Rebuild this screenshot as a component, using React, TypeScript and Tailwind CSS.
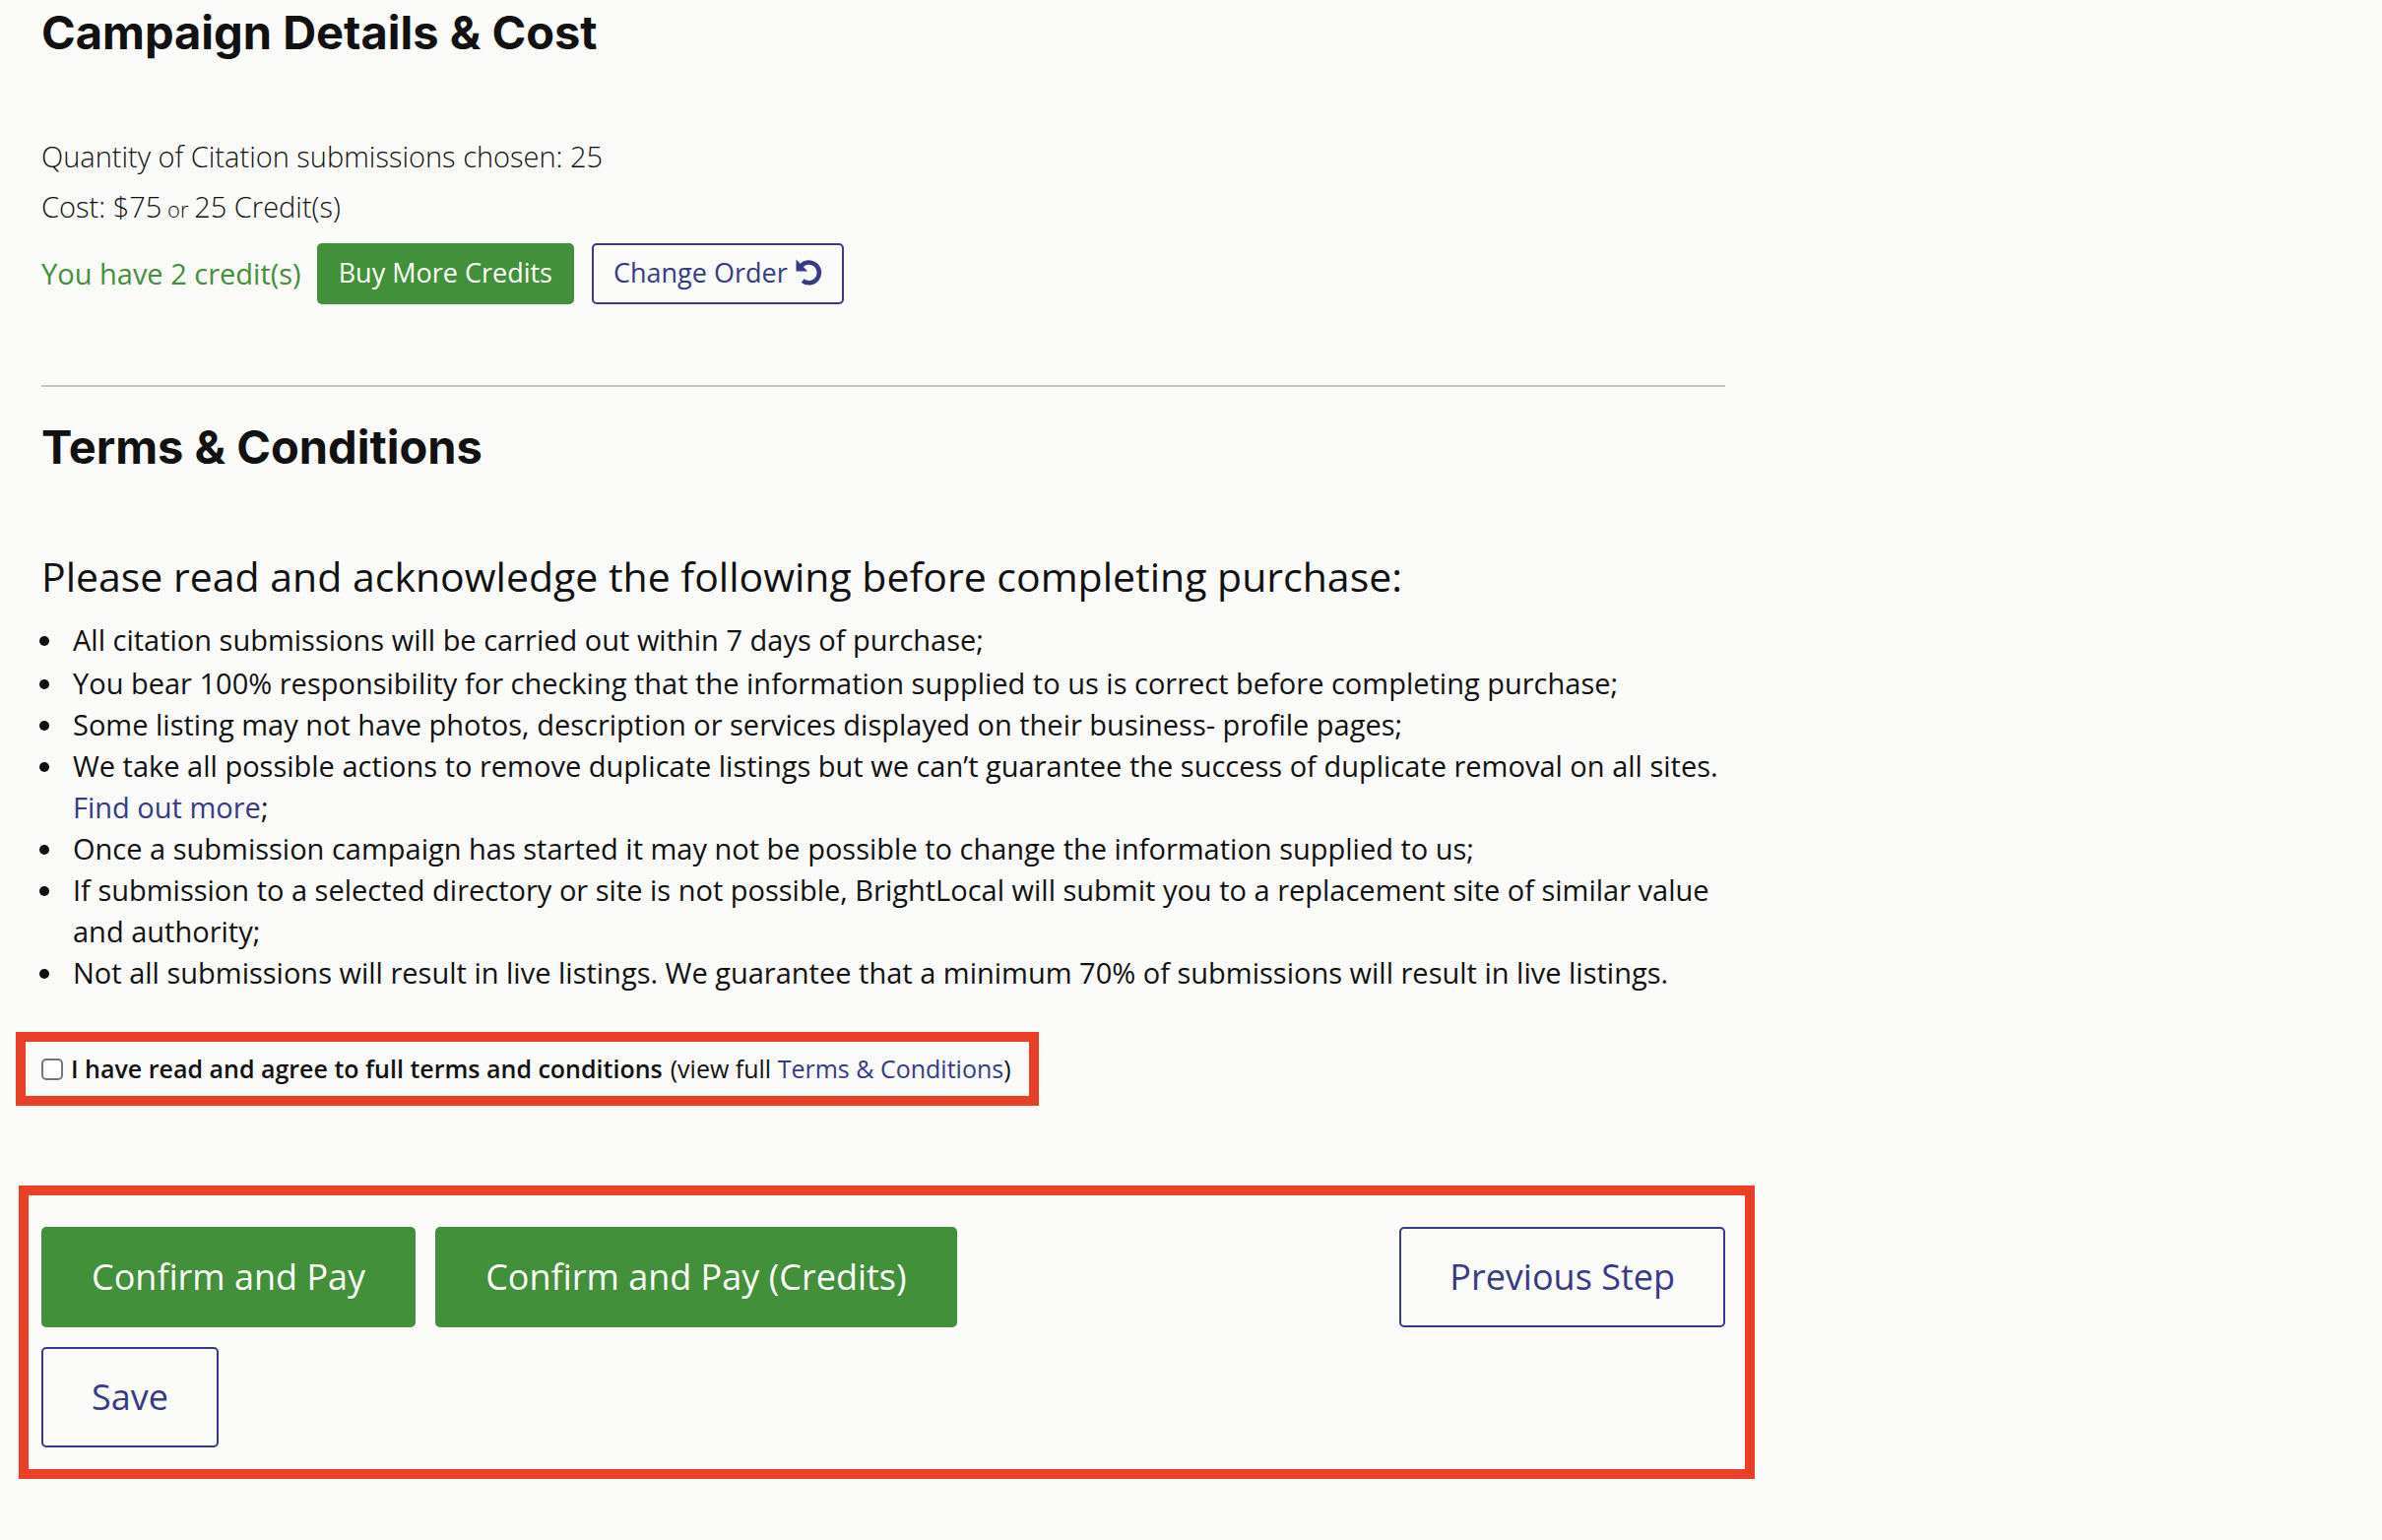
import type { ButtonHTMLAttributes, ReactNode } from 'react'
import clsx from 'clsx'

type ButtonProps = ButtonHTMLAttributes<HTMLButtonElement> & {
  variant?: 'primary' | 'outline'
  size?: 'sm' | 'lg'
}

function Button({ variant = 'primary', size = 'sm', className, children, ...rest }: ButtonProps) {
  return (
    <button
      type="button"
      className={clsx(
        'inline-flex items-center justify-center rounded-[5px] border-2 cursor-pointer whitespace-nowrap',
        variant === 'primary' && 'border-[#43903a] bg-[#43903a] text-white',
        variant === 'outline' && 'border-[#373a86] bg-transparent text-[#373a86]',
        size === 'sm' && 'h-[62px] px-5 pb-[2px] text-[27px]',
        size === 'lg' && 'h-[102px] px-[49px] text-[36px]',
        className,
      )}
      {...rest}
    >
      {children}
    </button>
  )
}

function Heading({ children }: { children: ReactNode }) {
  return <h2 className="font-['Inter',sans-serif] text-[47px] leading-[66px] font-bold">{children}</h2>
}

function UndoIcon() {
  return (
    <svg viewBox="0 0 27 27" className="mb-[2px] ml-2 h-[27px] w-[27px]" aria-hidden="true">
      <path
        d="M5.5 7.2 A10.4 10.4 0 1 1 7.2 22.2"
        fill="none"
        stroke="currentColor"
        strokeWidth="4.6"
      />
      <path d="M0.5 0.5 V12.4 H12.2 Z" fill="currentColor" />
    </svg>
  )
}

const terms: ReactNode[] = [
  'All citation submissions will be carried out within 7 days of purchase;',
  'You bear 100% responsibility for checking that the information supplied to us is correct before completing purchase;',
  'Some listing may not have photos, description or services displayed on their business- profile pages;',
  <>
    We take all possible actions to remove duplicate listings but we can’t guarantee the success of duplicate
    removal on all sites.{' '}
    <a href="#" className="text-[#373a86]">
      Find out more
    </a>
    ;
  </>,
  'Once a submission campaign has started it may not be possible to change the information supplied to us;',
  'If submission to a selected directory or site is not possible, BrightLocal will submit you to a replacement site of similar value and authority;',
  'Not all submissions will result in live listings. We guarantee that a minimum 70% of submissions will result in live listings.',
]

export default function App() {
  return (
    <div className="min-h-screen bg-[#fafaf8] pl-[42px] text-[#111] font-['Open_Sans',sans-serif]">
      <main className="max-w-[1710px]">
        {/* Campaign details */}
        <section>
          <Heading>Campaign Details &amp; Cost</Heading>
          <div className="mt-[67px] text-[29px] leading-[51px] font-light">
            <p>Quantity of Citation submissions chosen: 25</p>
            <p>
              Cost: $75<span className="text-[22px] leading-none"> or </span>25 Credit(s)
            </p>
          </div>
          <div className="mt-3 flex items-center gap-4">
            <span className="text-[29px] text-[#43903a]">You have 2 credit(s)</span>
            <div className="flex gap-[18px]">
              <Button>Buy More Credits</Button>
              <Button variant="outline">
                Change Order
                <UndoIcon />
              </Button>
            </div>
          </div>
        </section>

        <hr className="mt-[82px] border-t-2 border-[#c1c1c1]" />

        {/* Terms */}
        <section className="mt-7">
          <Heading>Terms &amp; Conditions</Heading>
          <h3 className="mt-[70px] text-[41px] leading-[56px]">
            Please read and acknowledge the following before completing purchase:
          </h3>
          <ul className="mt-4 text-[29px] leading-[42px]">
            {terms.map((term, i) => (
              <li
                key={i}
                className="flex first:mb-[2px] before:mt-[17px] before:mr-6 before:-ml-[2px] before:size-[10px] before:shrink-0 before:rounded-full before:bg-[#111]"
              >
                <span>{term}</span>
              </li>
            ))}
          </ul>
        </section>

        {/* Agreement */}
        <div className="mt-[39px] -ml-[26px] flex h-[75px] w-fit items-center border-[10px] border-[#ea4026] pr-[18px] pl-4 text-[25px]">
          <input
            id="agree"
            type="checkbox"
            className="mr-2 h-[22px] w-[22px] appearance-none rounded-[5px] border-2 border-[#767676] bg-white checked:bg-[#373a86]"
          />
          <label htmlFor="agree" className="font-semibold">
            I have read and agree to full terms and conditions
          </label>
          <span className="ml-2">
            (view full{' '}
            <a href="#" className="text-[#373a86]">
              Terms &amp; Conditions
            </a>
            )
          </span>
        </div>

        {/* Actions */}
        <div className="mt-[81px] -mr-[30px] -ml-[23px] flex items-start justify-between border-[10px] border-[#ea4026] pt-8 pr-5 pb-[22px] pl-[13px]">
          <div className="flex flex-col items-start gap-5">
            <div className="flex gap-5">
              <Button size="lg">Confirm and Pay</Button>
              <Button size="lg">Confirm and Pay (Credits)</Button>
            </div>
            <Button size="lg" variant="outline">
              Save
            </Button>
          </div>
          <Button size="lg" variant="outline">
            Previous Step
          </Button>
        </div>
      </main>
    </div>
  )
}
